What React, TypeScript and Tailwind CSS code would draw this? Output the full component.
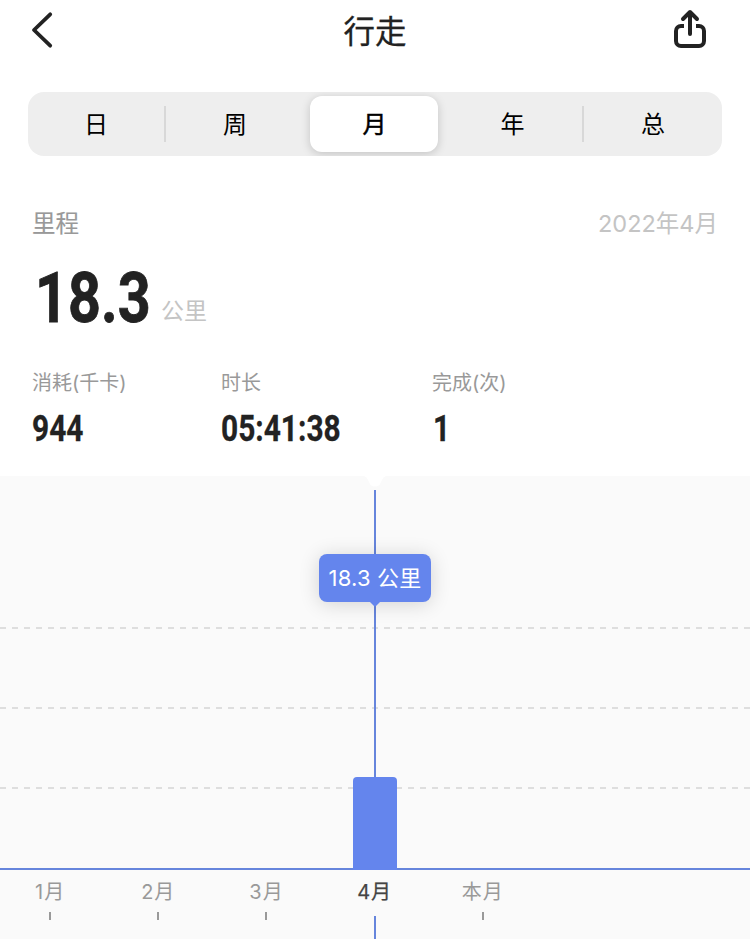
import React from "react";

const tabs = ["日", "周", "月", "年", "总"];

const stats = [
  { label: "消耗(千卡)", value: "944", width: "w-[189px]", shift: "ml-0" },
  { label: "时长", value: "05:41:38", width: "w-[211px]", shift: "ml-0" },
  { label: "完成(次)", value: "1", width: "w-[200px]", shift: "ml-px" },
];

const months = ["1月", "2月", "3月", "4月", "本月"];

function Header() {
  return (
    <header className="flex h-[92px] items-start justify-between pl-[30px] pr-[42px]">
      <svg className="mt-[10px] h-10 w-6" viewBox="0 0 24 40" fill="none" stroke="#222" strokeWidth="3.8" strokeLinecap="round" strokeLinejoin="round">
        <path d="M20.2 4.3 4 20l16.2 15.7" />
      </svg>
      <h1 className="ml-6 mt-[9px] text-[31.5px] leading-[46px] text-[#222] [-webkit-text-stroke:0.3px_#222]">行走</h1>
      <svg className="mt-[8px] h-[42px] w-9" viewBox="0 0 36 42" fill="none" stroke="#222" strokeWidth="4" strokeLinejoin="round">
        <path d="M12 18H9a5 5 0 0 0-5 5v10a5 5 0 0 0 5 5h18a5 5 0 0 0 5-5V23a5 5 0 0 0-5-5h-3" />
        <path d="M18 26V4.5M11 11l7-7 7 7" strokeLinecap="round" />
      </svg>
    </header>
  );
}

function Divider() {
  return <div className="h-9 w-0.5 bg-[#d8d8d8]" />;
}

function Tabs() {
  return (
    <nav className="mx-7 flex h-16 items-center overflow-hidden rounded-2xl bg-[#eeeeee] text-2xl text-black">
      <div className="flex h-14 w-[136px] items-center justify-center pt-px">{tabs[0]}</div>
      <Divider />
      <div className="mr-[6px] flex h-14 w-[138px] items-center justify-center pt-px">{tabs[1]}</div>
      <div className="flex h-14 w-32 items-center justify-center rounded-xl bg-white pl-px pt-px shadow-[0_2px_10px_rgba(0,0,0,0.18)] [-webkit-text-stroke:0.5px_black]">
        {tabs[2]}
      </div>
      <div className="ml-[5px] flex h-14 w-[139px] items-center justify-center pt-px">{tabs[3]}</div>
      <Divider />
      <div className="flex h-14 flex-1 items-center justify-center pt-px">{tabs[4]}</div>
    </nav>
  );
}

function Summary() {
  return (
    <section className="h-[320px] px-8 pt-[50px]">
      <div className="flex h-9 items-center justify-between">
        <span className="text-[23.5px] leading-9 text-[#999] [-webkit-text-stroke:0.15px_#999]">里程</span>
        <span className="text-[23.5px] leading-9 text-[#c4c4c4]">2022年4月</span>
      </div>
      <div className="mt-[14px] flex h-[84px] items-start">
        <div className="w-[129px] pl-[3px]">
          <span className="inline-block origin-left scale-x-[0.81] font-[Roboto] text-[71px] leading-[84px] font-bold text-[#222] [-webkit-text-stroke:0.8px_#222]">18.3</span>
        </div>
        <span className="mt-[37px] text-[23px] leading-9 text-[#c4c4c4]">公里</span>
      </div>
      <div className="mt-[28px] flex">
        {stats.map((s) => (
          <div key={s.label} className={s.width}>
            <div className="text-[20px] leading-[30px] text-[#999]">{s.label}</div>
            <div className={s.shift}>
              <div className="mt-[10px] inline-block origin-left scale-x-[0.83] font-[Roboto] text-[36px] leading-[42px] font-bold text-[#222] [-webkit-text-stroke:0.3px_#222]">{s.value}</div>
            </div>
          </div>
        ))}
      </div>
    </section>
  );
}

function DashedLine() {
  return <div className="h-0.5 w-full bg-[repeating-linear-gradient(90deg,#dedede_0_6px,transparent_6px_12px)]" />;
}

function Chart() {
  return (
    <section className="relative h-[463px] bg-[#fafafa]">
      <div className="flex h-[394px] flex-col border-b-2 border-[#6685dc] pt-[151px]">
        <DashedLine />
        <div className="h-[78px]" />
        <DashedLine />
        <div className="h-[78px]" />
        <DashedLine />
      </div>
      <div className="-ml-1 flex w-[541px]">
        {months.map((m) => (
          <div key={m} className="flex w-[108.2px] flex-col items-center">
            <span className={m === "4月" ? "mt-[7px] text-[20px] leading-[30px] tracking-[1px] text-[#444] [-webkit-text-stroke:0.25px_#444]" : "mt-[7px] text-[20px] leading-[30px] tracking-[1px] text-[#999]"}>{m}</span>
            {m === "4月" ? <div className="mt-[9px] h-[23px] w-0.5 bg-[#6685dc]" /> : <div className="mt-[5px] h-2 w-0.5 bg-[#999]" />}
          </div>
        ))}
      </div>
      <svg className="absolute left-[361px] top-0 h-3 w-7" viewBox="0 0 28 12" fill="white">
        <path d="M3 0h22q-3 1-4 4l-2.500 5q-4.500 3-9 0L7 4Q6 1 3 0Z" />
      </svg>
      <div className="absolute left-[374px] top-[14px] h-[287px] w-0.5 bg-[#6685dc]" />
      <div className="absolute left-[353px] top-[301px] h-[93px] w-11 rounded-t bg-[#6485ed]" />
      <div className="absolute left-[319px] top-[78px] flex h-12 w-28 items-center justify-center rounded-lg bg-[#6485ed] pt-px text-[22px] tracking-[0.2px] text-white shadow-[0_2px_20px_rgba(0,0,0,0.16)]">
        18.3 公里
        <svg className="absolute left-[50px] top-[47px] h-[7px] w-3" viewBox="0 0 12 7" fill="#6485ed">
          <path d="M0 0h12L7 5q-1 1-2 0Z" />
        </svg>
      </div>
    </section>
  );
}

export default function App() {
  return (
    <main className="h-[939px] w-[750px] overflow-hidden bg-white font-['Inter','Noto_Sans_CJK_SC',sans-serif]">
      <Header />
      <Tabs />
      <Summary />
      <Chart />
    </main>
  );
}
